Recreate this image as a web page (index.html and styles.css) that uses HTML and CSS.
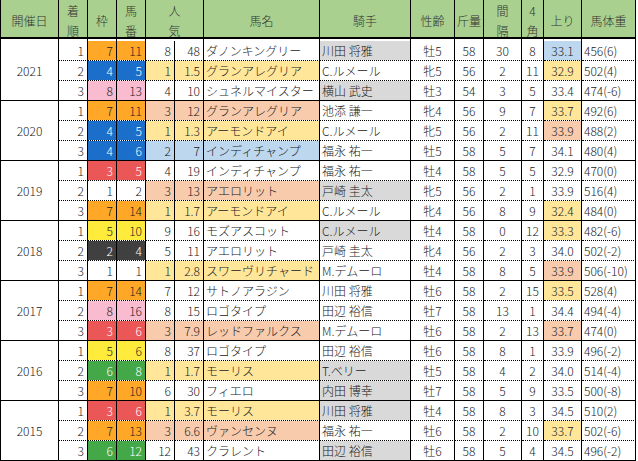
FILE: index.html
```html
<!DOCTYPE html>
<html lang="ja">
<head>
<meta charset="utf-8">
<title>安田記念 過去成績</title>
<link rel="stylesheet" href="styles.css">
</head>
<body>
<div class="sheet">
  <div class="hd">開催日</div>
  <div class="hd">着<br>順</div>
  <div class="hd">枠</div>
  <div class="hd">馬<br>番</div>
  <div class="hd span2">人<br>気</div>
  <div class="hd">馬名</div>
  <div class="hd">騎手</div>
  <div class="hd">性齢</div>
  <div class="hd">斤量</div>
  <div class="hd">間<br>隔</div>
  <div class="hd">4<br>角</div>
  <div class="hd">上り</div>
  <div class="hd">馬体重</div>

  <!-- 2021 -->
  <div class="row">
    <div class="c year">2021</div>
    <div class="c r">1</div><div class="c r f7">7</div><div class="c r f7">11</div>
    <div class="c r">8</div><div class="c r">48</div><div class="c l">ダノンキングリー</div>
    <div class="c l g">川田 将雅</div><div class="c m">牡5</div><div class="c m">58</div><div class="c m">30</div><div class="c m">8</div><div class="c m p2">33.1</div><div class="c l">456(6)</div>
  </div>
  <div class="row">
    <div class="c r">2</div><div class="c r f4">4</div><div class="c r f4">5</div>
    <div class="c r p1">1</div><div class="c r p1">1.5</div><div class="c l p1">グランアレグリア</div>
    <div class="c l">C.ルメール</div><div class="c m">牝5</div><div class="c m">56</div><div class="c m">2</div><div class="c m">11</div><div class="c m p1">32.9</div><div class="c l">502(4)</div>
  </div>
  <div class="row end">
    <div class="c r">3</div><div class="c r f8">8</div><div class="c r f8">13</div>
    <div class="c r">4</div><div class="c r">10</div><div class="c l">シュネルマイスター</div>
    <div class="c l g">横山 武史</div><div class="c m">牡3</div><div class="c m">54</div><div class="c m">3</div><div class="c m">5</div><div class="c m">33.4</div><div class="c l">474(-6)</div>
  </div>

  <!-- 2020 -->
  <div class="row">
    <div class="c year">2020</div>
    <div class="c r">1</div><div class="c r f7">7</div><div class="c r f7">11</div>
    <div class="c r p3">3</div><div class="c r p3">12</div><div class="c l p3">グランアレグリア</div>
    <div class="c l">池添 謙一</div><div class="c m">牝4</div><div class="c m">56</div><div class="c m">9</div><div class="c m">7</div><div class="c m p1">33.7</div><div class="c l">492(6)</div>
  </div>
  <div class="row">
    <div class="c r">2</div><div class="c r f4">4</div><div class="c r f4">5</div>
    <div class="c r p1">1</div><div class="c r p1">1.3</div><div class="c l p1">アーモンドアイ</div>
    <div class="c l">C.ルメール</div><div class="c m">牝5</div><div class="c m">56</div><div class="c m">2</div><div class="c m">11</div><div class="c m p3">33.9</div><div class="c l">488(2)</div>
  </div>
  <div class="row end">
    <div class="c r">3</div><div class="c r f4">4</div><div class="c r f4">6</div>
    <div class="c r p2">2</div><div class="c r p2">7</div><div class="c l p2">インディチャンプ</div>
    <div class="c l">福永 祐一</div><div class="c m">牡5</div><div class="c m">58</div><div class="c m">5</div><div class="c m">7</div><div class="c m">34.1</div><div class="c l">480(4)</div>
  </div>

  <!-- 2019 -->
  <div class="row">
    <div class="c year">2019</div>
    <div class="c r">1</div><div class="c r f3">3</div><div class="c r f3">5</div>
    <div class="c r">4</div><div class="c r">19</div><div class="c l">インディチャンプ</div>
    <div class="c l">福永 祐一</div><div class="c m">牡4</div><div class="c m">58</div><div class="c m">5</div><div class="c m">5</div><div class="c m">32.9</div><div class="c l">470(0)</div>
  </div>
  <div class="row">
    <div class="c r">2</div><div class="c r">1</div><div class="c r">2</div>
    <div class="c r p3">3</div><div class="c r p3">13</div><div class="c l p3">アエロリット</div>
    <div class="c l g">戸崎 圭太</div><div class="c m">牝5</div><div class="c m">56</div><div class="c m">2</div><div class="c m">1</div><div class="c m">33.9</div><div class="c l">516(4)</div>
  </div>
  <div class="row end">
    <div class="c r">3</div><div class="c r f7">7</div><div class="c r f7">14</div>
    <div class="c r p1">1</div><div class="c r p1">1.7</div><div class="c l p1">アーモンドアイ</div>
    <div class="c l">C.ルメール</div><div class="c m">牝4</div><div class="c m">56</div><div class="c m">8</div><div class="c m">9</div><div class="c m p1">32.4</div><div class="c l">484(0)</div>
  </div>

  <!-- 2018 -->
  <div class="row">
    <div class="c year">2018</div>
    <div class="c r">1</div><div class="c r f5">5</div><div class="c r f5">10</div>
    <div class="c r">9</div><div class="c r">16</div><div class="c l">モズアスコット</div>
    <div class="c l g">C.ルメール</div><div class="c m">牡4</div><div class="c m">58</div><div class="c m">0</div><div class="c m">12</div><div class="c m p1">33.3</div><div class="c l">482(-6)</div>
  </div>
  <div class="row">
    <div class="c r">2</div><div class="c r f2">2</div><div class="c r f2">4</div>
    <div class="c r">5</div><div class="c r">11</div><div class="c l">アエロリット</div>
    <div class="c l">戸崎 圭太</div><div class="c m">牝4</div><div class="c m">56</div><div class="c m">2</div><div class="c m">3</div><div class="c m">34.0</div><div class="c l">502(-2)</div>
  </div>
  <div class="row end">
    <div class="c r">3</div><div class="c r">1</div><div class="c r">1</div>
    <div class="c r p1">1</div><div class="c r p1">2.8</div><div class="c l p1">スワーヴリチャード</div>
    <div class="c l">M.デムーロ</div><div class="c m">牡4</div><div class="c m">58</div><div class="c m">8</div><div class="c m">5</div><div class="c m p3">33.9</div><div class="c l">506(-10)</div>
  </div>

  <!-- 2017 -->
  <div class="row">
    <div class="c year">2017</div>
    <div class="c r">1</div><div class="c r f7">7</div><div class="c r f7">14</div>
    <div class="c r">7</div><div class="c r">12</div><div class="c l">サトノアラジン</div>
    <div class="c l">川田 将雅</div><div class="c m">牡6</div><div class="c m">58</div><div class="c m">2</div><div class="c m">15</div><div class="c m p1">33.5</div><div class="c l">528(4)</div>
  </div>
  <div class="row">
    <div class="c r">2</div><div class="c r f8">8</div><div class="c r f8">16</div>
    <div class="c r">8</div><div class="c r">15</div><div class="c l">ロゴタイプ</div>
    <div class="c l">田辺 裕信</div><div class="c m">牡7</div><div class="c m">58</div><div class="c m">13</div><div class="c m">1</div><div class="c m">34.4</div><div class="c l">494(-4)</div>
  </div>
  <div class="row end">
    <div class="c r">3</div><div class="c r f3">3</div><div class="c r f3">6</div>
    <div class="c r p3">3</div><div class="c r p3">7.9</div><div class="c l p3">レッドファルクス</div>
    <div class="c l">M.デムーロ</div><div class="c m">牡6</div><div class="c m">58</div><div class="c m">2</div><div class="c m">13</div><div class="c m p3">33.7</div><div class="c l">474(0)</div>
  </div>

  <!-- 2016 -->
  <div class="row">
    <div class="c year">2016</div>
    <div class="c r">1</div><div class="c r f5">5</div><div class="c r f5">6</div>
    <div class="c r">8</div><div class="c r">37</div><div class="c l">ロゴタイプ</div>
    <div class="c l">田辺 裕信</div><div class="c m">牡6</div><div class="c m">58</div><div class="c m">8</div><div class="c m">1</div><div class="c m">33.9</div><div class="c l">496(-2)</div>
  </div>
  <div class="row">
    <div class="c r">2</div><div class="c r f6">6</div><div class="c r f6">8</div>
    <div class="c r p1">1</div><div class="c r p1">1.7</div><div class="c l p1">モーリス</div>
    <div class="c l g">T.ベリー</div><div class="c m">牡5</div><div class="c m">58</div><div class="c m">4</div><div class="c m">2</div><div class="c m">34.0</div><div class="c l">514(-4)</div>
  </div>
  <div class="row end">
    <div class="c r">3</div><div class="c r f7">7</div><div class="c r f7">10</div>
    <div class="c r">6</div><div class="c r">30</div><div class="c l">フィエロ</div>
    <div class="c l g">内田 博幸</div><div class="c m">牡7</div><div class="c m">58</div><div class="c m">5</div><div class="c m">9</div><div class="c m">33.5</div><div class="c l">500(-8)</div>
  </div>

  <!-- 2015 -->
  <div class="row">
    <div class="c year">2015</div>
    <div class="c r">1</div><div class="c r f3">3</div><div class="c r f3">6</div>
    <div class="c r p1">1</div><div class="c r p1">3.7</div><div class="c l p1">モーリス</div>
    <div class="c l g">川田 将雅</div><div class="c m">牡4</div><div class="c m">58</div><div class="c m">8</div><div class="c m">3</div><div class="c m">34.5</div><div class="c l">510(2)</div>
  </div>
  <div class="row">
    <div class="c r">2</div><div class="c r f7">7</div><div class="c r f7">13</div>
    <div class="c r p3">3</div><div class="c r p3">6.6</div><div class="c l p3">ヴァンセンヌ</div>
    <div class="c l">福永 祐一</div><div class="c m">牡6</div><div class="c m">58</div><div class="c m">2</div><div class="c m">10</div><div class="c m p1">33.7</div><div class="c l">502(-6)</div>
  </div>
  <div class="row end">
    <div class="c r">3</div><div class="c r f6">6</div><div class="c r f6">12</div>
    <div class="c r">12</div><div class="c r">43</div><div class="c l">クラレント</div>
    <div class="c l g">田辺 裕信</div><div class="c m">牡6</div><div class="c m">58</div><div class="c m">5</div><div class="c m">4</div><div class="c m">34.5</div><div class="c l">496(-2)</div>
  </div>
</div>
</body>
</html>
```

FILE: styles.css
```css
html, body {
  margin: 0;
  padding: 0;
  background: #fff;
}

body {
  font-family: "Noto Sans CJK JP", "Noto Sans", sans-serif;
  font-size: 12px;
  font-weight: 300;
  color: #222;
}

.sheet {
  display: grid;
  grid-template-columns: 58px 29px 29px 29px 29px 29px 116px 91px 44px 29px 38px 22px 38px 54px;
  grid-template-rows: 41px;
  grid-auto-rows: 20px;
  width: max-content;
  border-left: 1px solid #000;
  background: #fff;
}

.hd {
  box-sizing: border-box;
  border-right: 1px solid #000;
  background: linear-gradient(to bottom, #a9d08e 0, #a9d08e 37px, #000 37px, #000 39px, #fff 39px, #fff 41px);
  display: flex;
  align-items: center;
  justify-content: center;
  text-align: center;
  line-height: 20px;
  color: #333;
}

.span2 {
  grid-column: span 2;
}

.row {
  display: contents;
}

.c {
  box-sizing: border-box;
  border-right: 1px solid #000;
  border-bottom: 1px dotted #000;
  background-clip: padding-box;
  display: flex;
  align-items: center;
  padding: 0 3px;
  white-space: nowrap;
  overflow: hidden;
  line-height: 19px;
}

.end > .c,
.year {
  border-bottom-style: solid;
}

.year {
  grid-row: span 3;
  justify-content: center;
}

.r { justify-content: flex-end; }
.m { justify-content: center; }
.l { justify-content: flex-start; padding-left: 2px; }

/* 枠色 */
.f2 { background-color: #404040; color: #fff; }
.f3 { background-color: #eb5656; color: #fff; }
.f4 { background-color: #1b6fcb; color: #fff; }
.f5 { background-color: #ffeb3b; }
.f6 { background-color: #44a748; color: #fff; }
.f7 { background-color: #ffa726; }
.f8 { background-color: #f8bbd0; }

/* 人気・上り順位 */
.p1 { background-color: #ffe699; }
.p2 { background-color: #bdd7ee; }
.p3 { background-color: #f8cbad; }

.g { background-color: #d9d9d9; }
```
